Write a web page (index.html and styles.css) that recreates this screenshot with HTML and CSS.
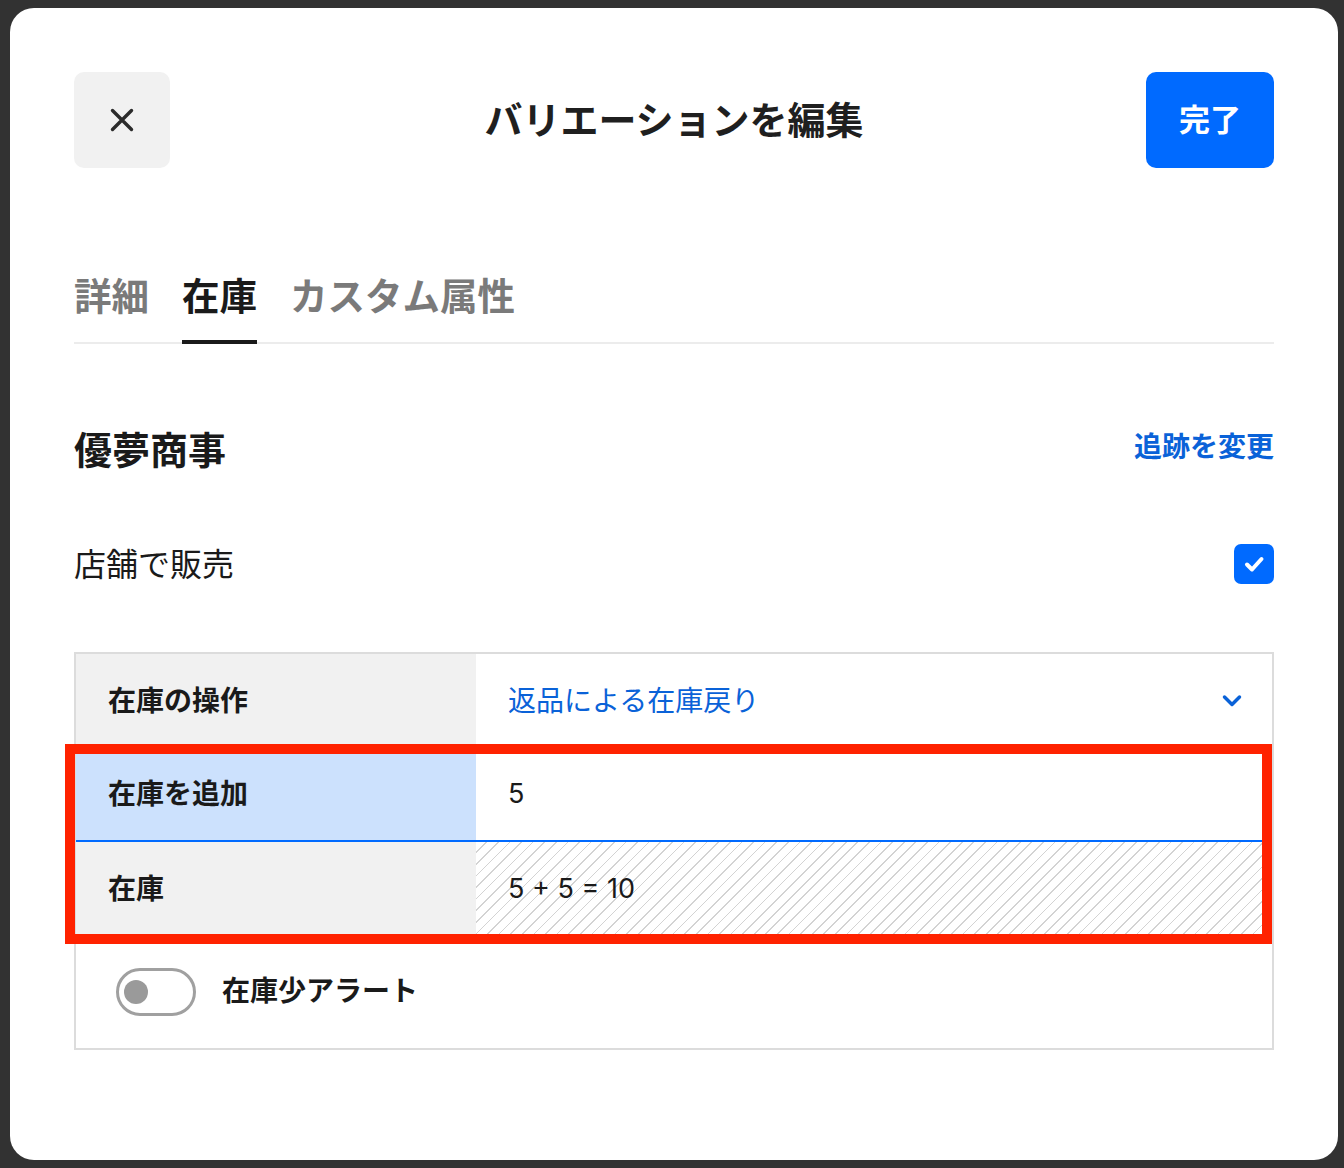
FILE: index.html
```html
<!DOCTYPE html>
<html lang="ja">
<head>
    <meta charset="UTF-8">
    <meta name="viewport" content="width=device-width, initial-scale=1.0">
    <title>バリエーションを編集</title>
    <link rel="stylesheet" href="styles.css">
</head>
<body>
    <div class="modal">
        <header class="modal-header">
            <button class="close-btn" aria-label="閉じる">
                <svg width="24" height="24" viewBox="0 0 24 24">
                    <path d="M2.5 2.5L21.5 21.5M21.5 2.5L2.5 21.5" stroke="#2b2b2b" stroke-width="3.4" stroke-linecap="round" fill="none"/>
                </svg>
            </button>
            <h1 class="modal-title">バリエーションを編集</h1>
            <button class="done-btn">完了</button>
        </header>

        <nav class="tabs">
            <span class="tab">詳細</span>
            <span class="tab active">在庫</span>
            <span class="tab">カスタム属性</span>
        </nav>

        <div class="section-head">
            <h2>優夢商事</h2>
            <a class="link">追跡を変更</a>
        </div>

        <div class="sell-row">
            <span class="sell-label">店舗で販売</span>
            <span class="checkbox">
                <svg width="22" height="22" viewBox="0 0 22 22">
                    <path d="M4 11.5L9 16.5L18.5 6" stroke="#fff" stroke-width="4" stroke-linecap="round" stroke-linejoin="round" fill="none"/>
                </svg>
            </span>
        </div>

        <div class="stock-table">
            <div class="stock-row">
                <div class="cell-label">在庫の操作</div>
                <div class="cell-value select">
                    <span>返品による在庫戻り</span>
                    <svg width="20" height="14" viewBox="0 0 20 14">
                        <path d="M2.5 3L10 10.5L17.5 3" stroke="#0a62d8" stroke-width="3.5" stroke-linecap="round" stroke-linejoin="round" fill="none"/>
                    </svg>
                </div>
            </div>
            <div class="stock-row focused">
                <div class="cell-label">在庫を追加</div>
                <div class="cell-value num">5</div>
            </div>
            <div class="stock-row">
                <div class="cell-label">在庫</div>
                <div class="cell-value num hatched">5 + 5 = 10</div>
            </div>
            <div class="alert-row">
                <span class="toggle"><span class="knob"></span></span>
                <span class="alert-label">在庫少アラート</span>
            </div>

            <!-- 注釈の赤枠 -->
            <div class="highlight"></div>
        </div>
    </div>
</body>
</html>
```

FILE: styles.css
```css
* {
    margin: 0;
    padding: 0;
    box-sizing: border-box;
}

body {
    background-color: #323232;
    font-family: 'Noto Sans CJK JP', sans-serif;
    color: #1a1a1a;
    height: 1168px;
    overflow: hidden;
}

.modal {
    width: 1328px;
    height: 1152px;
    margin: 8px 0 0 10px;
    background: #fff;
    border-radius: 24px;
    padding: 64px;
}

/* ヘッダー */
.modal-header {
    display: grid;
    grid-template-columns: 1fr auto 1fr;
    align-items: center;
    height: 96px;
}

.close-btn {
    width: 96px;
    height: 96px;
    border: none;
    border-radius: 10px;
    background-color: #f1f1f1;
    display: flex;
    align-items: center;
    justify-content: center;
}

.modal-title {
    font-size: 38px;
    font-weight: 700;
    line-height: 56px;
    padding-bottom: 4px;
    color: #1f1f1f;
}

.done-btn {
    justify-self: end;
    width: 128px;
    height: 96px;
    border: none;
    border-radius: 10px;
    background-color: #006aff;
    color: #fff;
    font-family: 'Noto Sans CJK JP', sans-serif;
    font-size: 31px;
    font-weight: 700;
    padding-bottom: 5px;
}

/* タブ */
.tabs {
    display: flex;
    gap: 33px;
    margin-top: 98px;
    border-bottom: 2px solid #ececec;
}

.tab {
    font-size: 37.5px;
    font-weight: 700;
    line-height: 56px;
    color: #7a7a7a;
    padding-bottom: 18px;
    border-bottom: 4px solid transparent;
    margin-bottom: -2px;
}

.tab.active {
    color: #1a1a1a;
    border-bottom-color: #1a1a1a;
    border-radius: 2px 2px 0 0;
}

/* セクション */
.section-head {
    display: flex;
    justify-content: space-between;
    align-items: center;
    height: 56px;
    margin-top: 77px;
}

.section-head h2 {
    font-size: 38px;
    font-weight: 700;
    line-height: 56px;
    padding-bottom: 3px;
}

.link {
    font-size: 28px;
    font-weight: 700;
    color: #0a62d8;
    padding-bottom: 8px;
}

.sell-row {
    display: flex;
    justify-content: space-between;
    align-items: center;
    height: 40px;
    margin-top: 67px;
}

.sell-label {
    font-size: 32px;
    line-height: 40px;
    padding-bottom: 4px;
}

.checkbox {
    width: 40px;
    height: 40px;
    border-radius: 7px;
    background-color: #006aff;
    display: flex;
    align-items: center;
    justify-content: center;
}

/* 在庫テーブル */
.stock-table {
    position: relative;
    margin-top: 68px;
    border: 2px solid #dcdcdc;
}

.stock-row {
    display: flex;
    height: 94px;
}

.cell-label {
    width: 400px;
    background-color: #f1f1f1;
    padding: 0 0 4px 32px;
    display: flex;
    align-items: center;
    font-size: 28px;
    font-weight: 700;
}

.cell-value {
    flex: 1;
    padding: 0 32px 4px;
    display: flex;
    align-items: center;
    font-size: 28px;
}

.cell-value.select {
    justify-content: space-between;
    color: #0a62d8;
    padding-right: 30px;
}

.cell-value.select svg {
    margin-top: 4px;
}

.cell-value.num {
    font-family: 'Inter', 'Noto Sans CJK JP', sans-serif;
    font-size: 27px;
    padding-bottom: 2px;
}

.stock-row.focused {
    border-bottom: 2px solid #006aff;
}

.stock-row.focused .cell-label {
    background-color: #cce1fd;
}

.hatched {
    background: repeating-linear-gradient(135deg, #fff 0, #fff 7px, #d3d3d3 7px, #d3d3d3 8.2px);
}

.alert-row {
    display: flex;
    align-items: center;
    gap: 26px;
    height: 112px;
    padding-left: 40px;
}

.alert-label {
    font-size: 28px;
    font-weight: 700;
    padding-bottom: 6px;
}

.toggle {
    width: 80px;
    height: 48px;
    border: 3px solid #a0a0a0;
    border-radius: 24px;
    display: flex;
    align-items: center;
    padding-left: 5px;
}

.knob {
    width: 24px;
    height: 24px;
    border-radius: 50%;
    background-color: #9a9a9a;
}

.highlight {
    position: absolute;
    left: -11px;
    top: 90px;
    width: 1207px;
    height: 200px;
    border: 10px solid #ff2200;
}
```
